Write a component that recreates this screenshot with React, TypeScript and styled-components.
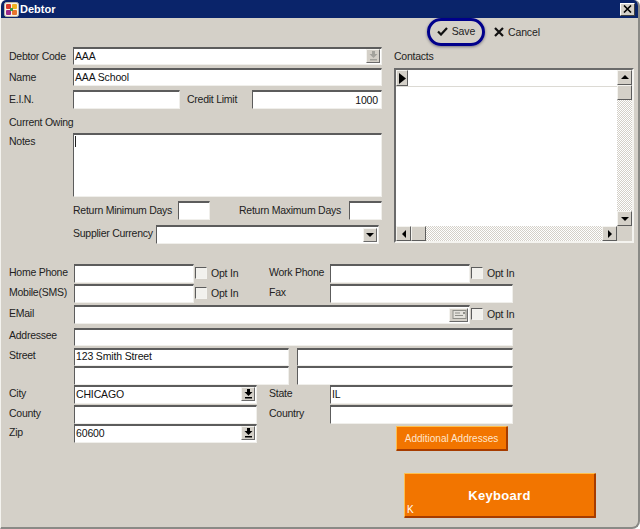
import { createGlobalStyle, styled } from 'styled-components';

const GlobalStyle = createGlobalStyle`
  html, body {
    margin: 0;
    padding: 0;
    background: #fff;
  }
  * {
    box-sizing: border-box;
  }
`;

const Window = styled.div`
  width: 640px;
  height: 529px;
  display: flex;
  flex-direction: column;
  overflow: hidden;
  background: #d4d0c8;
  border-radius: 6px 6px 8px 0;
  border-right: 2px solid #8a8a86;
  border-bottom: 2px solid #8a8a86;
  border-left: 1px solid #f4f3ef;
  font-family: 'Liberation Sans', Arial, sans-serif;
  font-size: 10px;
  color: #222;
`;

const TitleBar = styled.div`
  height: 18px;
  flex: none;
  display: flex;
  align-items: center;
  gap: 1px;
  padding: 0 3px 0 3px;
  background: #0a246a;
  color: #fff;
  font-family: 'Liberation Sans', Arial, sans-serif;
  font-size: 11px;
  font-weight: 700;
`;

const TitleText = styled.span`
  flex: 1;
  padding-bottom: 1px;
`;

const CloseButton = styled.div`
  width: 15px;
  height: 13px;
  display: flex;
  align-items: center;
  justify-content: center;
  background: #d4d0c8;
  border: 1px solid;
  border-color: #fff #404040 #404040 #fff;
`;

const Toolbar = styled.div`
  height: 29px;
  flex: none;
  display: flex;
  align-items: flex-start;
  justify-content: flex-end;
  padding-right: 98px;
`;

const SaveHighlight = styled.div`
  width: 58px;
  height: 28px;
  margin-right: 9px;
  padding-bottom: 2px;
  display: flex;
  align-items: center;
  justify-content: center;
  border: 3px solid #00008b;
  border-radius: 14px;
  box-shadow: 0 1px 3px rgba(0, 0, 40, 0.45);
`;

const ToolButton = styled.div<{ $plain?: boolean }>`
  display: flex;
  align-items: center;
  gap: 4px;
  margin-top: ${({ $plain }) => ($plain ? 8 : 0)}px;
  font-size: 10.5px;
  letter-spacing: -0.1px;
`;

const Content = styled.div`
  flex: 1;
  display: flex;
  flex-direction: column;
  padding-left: 7px;
`;

const TopSection = styled.div`
  display: flex;
  gap: 12px;
`;

const LeftColumn = styled.div`
  width: 374px;
  display: flex;
  flex-direction: column;
`;

const Row = styled.div<{ $top?: number; $indent?: number; $h?: number }>`
  display: flex;
  align-items: center;
  height: ${({ $h }) => ($h ? `${$h}px` : 'auto')};
  margin-top: ${({ $top }) => $top ?? 0}px;
  padding-left: ${({ $indent }) => $indent ?? 0}px;
`;

const Label = styled.span<{ $w?: number; $left?: number; $alignTop?: boolean }>`
  flex: none;
  width: ${({ $w }) => ($w ? `${$w}px` : 'auto')};
  margin-left: ${({ $left }) => $left ?? 0}px;
  white-space: nowrap;
  font-size: 10.5px;
  letter-spacing: -0.25px;
  align-self: ${({ $alignTop }) => ($alignTop ? 'flex-start' : 'center')};
  padding: ${({ $alignTop }) => ($alignTop ? '2px 0 0 1px' : '0 0 1px 1px')};
`;

const IndentLabel = styled(Label)`
  padding-left: 0;
`;

const LowerLabel = styled(Label)<{ $flush?: boolean }>`
  padding-bottom: 4px;
  padding-left: ${({ $flush }) => ($flush ? 0 : 1)}px;
`;

const Field = styled.div<{ $w?: number; $h?: number; $right?: boolean }>`
  width: ${({ $w }) => ($w ? `${$w}px` : '100%')};
  flex: ${({ $w }) => ($w ? 'none' : '1')};
  height: ${({ $h }) => $h ?? 19}px;
  display: flex;
  align-items: center;
  justify-content: ${({ $right }) => ($right ? 'flex-end' : 'space-between')};
  padding: 0 ${({ $right }) => ($right ? '3px' : '1px')} 1px 1px;
  background: #fff;
  border: 2px solid;
  border-color: #5c5c5c #f0efeb #f0efeb #5c5c5c;
  border-width: 2px 1px 1px 1px;
  font-size: 10.5px;
  letter-spacing: -0.15px;
  color: #111;
  white-space: nowrap;
`;

const LowerField = styled(Field)`
  padding-bottom: 3px;
`;

const Caret = styled.span`
  width: 1px;
  height: 11px;
  margin-top: 1px;
  background: #222;
`;

const NotesField = styled(Field)`
  align-items: flex-start;
`;

const ComboButton = styled.div<{ $w?: number }>`
  width: ${({ $w }) => $w ?? 14}px;
  height: 14px;
  flex: none;
  display: flex;
  align-items: center;
  justify-content: center;
  background: #d4d0c8;
  border: 1px solid;
  border-color: #f4f3ef #6a6a6a #6a6a6a #f4f3ef;
`;

const RightColumn = styled.div`
  width: 240px;
  display: flex;
  flex-direction: column;
`;

const ContactsLabel = styled.div`
  height: 21px;
  padding-bottom: 3px;
  display: flex;
  align-items: center;
  font-size: 10.5px;
  letter-spacing: -0.25px;
`;

const Grid = styled.div`
  height: 175px;
  display: grid;
  grid-template-columns: 1fr 15px;
  grid-template-rows: 1fr 15px;
  background: #fff;
  border: 2px solid;
  border-color: #6a6a6a #f4f3ef #f4f3ef #6a6a6a;
`;

const GridBody = styled.div`
  background: #fff;
`;

const GridHeader = styled.div`
  height: 17px;
  display: flex;
  border-bottom: 1px solid #dcdad4;
`;

const RowMarker = styled.div`
  width: 12px;
  display: flex;
  align-items: center;
  justify-content: center;
  background: #d4d0c8;
  border: 1px solid;
  border-color: #f4f3ef #5c5c5c #5c5c5c #f4f3ef;
`;

const ScrollBar = styled.div<{ $horizontal?: boolean }>`
  display: flex;
  flex-direction: ${({ $horizontal }) => ($horizontal ? 'row' : 'column')};
  background: repeating-conic-gradient(#fff 0 25%, #d4d0c8 0 50%) 0 0 / 2px 2px;
`;

const ScrollTrack = styled.div`
  flex: 1;
`;

const ScrollButton = styled.div`
  width: 15px;
  height: 15px;
  flex: none;
  display: flex;
  align-items: center;
  justify-content: center;
  background: #d4d0c8;
  border: 1px solid;
  border-color: #f4f3ef #5c5c5c #5c5c5c #f4f3ef;
`;

const ScrollCorner = styled.div`
  background: #d4d0c8;
`;

const LowerGrid = styled.div`
  margin-top: 20px;
  display: grid;
  grid-template-columns: 66px 120px 75px 61px 140px 43px;
  grid-template-rows: 20px 21px 22px 20px 19px 19px 20px 19px auto;
  align-items: start;
`;

const Cell = styled.div<{ $from?: number; $span?: number }>`
  grid-column: ${({ $from, $span }) => `${$from ?? 'auto'} / span ${$span ?? 1}`};
  height: 19px;
  display: flex;
  align-items: center;
  gap: 8px;
`;

const OptIn = styled.div`
  height: 19px;
  display: flex;
  align-items: center;
  gap: 4px;
  padding: 0 0 2px 1px;
  font-size: 10.5px;
  letter-spacing: -0.2px;
  white-space: nowrap;
`;

const CheckBox = styled.span`
  width: 12px;
  height: 12px;
  flex: none;
  background: #f2f1ed;
  border: 1px solid;
  border-color: #5c5c5c #f4f3ef #f4f3ef #5c5c5c;
`;

const OrangeButton = styled.div<{ $large?: boolean }>`
  position: relative;
  display: flex;
  align-items: center;
  justify-content: center;
  width: ${({ $large }) => ($large ? 192 : 112)}px;
  height: ${({ $large }) => ($large ? 45 : 25)}px;
  background: #f27500;
  color: ${({ $large }) => ($large ? '#fff' : '#ffe6cc')};
  border: 1px solid;
  border-color: #ffc04d #a63c00 #a63c00 #ffc04d;
  border-width: 1px 2px 2px 1px;
  border-radius: 1px;
  font-size: ${({ $large }) => ($large ? 13 : 10)}px;
  font-weight: ${({ $large }) => ($large ? 700 : 400)};
  letter-spacing: ${({ $large }) => ($large ? '0.3px' : '0')};
`;

const AddressCell = styled.div`
  grid-column: 4 / span 3;
  margin-top: 2px;
  display: flex;
  justify-content: flex-end;
  padding-right: 5px;
`;

const ShortcutKey = styled.span`
  position: absolute;
  left: 2px;
  bottom: 1px;
  font-size: 10px;
  font-weight: 400;
`;

const KeyboardRow = styled.div`
  margin-top: 22px;
  padding-left: 396px;
`;

const AppIcon = () => (
  <svg width="15" height="15" viewBox="0 0 15 15">
    <rect x="0.5" y="0.5" width="14" height="14" rx="2" fill="#f6f3e8" stroke="#bdb8a8" />
    <rect x="2" y="2" width="5" height="5" rx="1" fill="#d8392b" />
    <rect x="8" y="2" width="5" height="5" rx="1" fill="#f0b020" />
    <rect x="2" y="8" width="5" height="5" rx="1" fill="#9a2a8c" />
    <rect x="8" y="8" width="5" height="5" rx="1" fill="#e8742c" />
    <rect x="6" y="6" width="3" height="3" fill="#3a9a48" />
  </svg>
);

const CloseGlyph = () => (
  <svg width="9" height="8" viewBox="0 0 9 8">
    <path d="M1 0.5 L8 7.5 M8 0.5 L1 7.5" stroke="#000" strokeWidth="1.6" />
  </svg>
);

const CheckIcon = () => (
  <svg width="11" height="9" viewBox="0 0 11 9">
    <path d="M1 4.5 L4 7.5 L10 1" fill="none" stroke="#111" strokeWidth="2.2" />
  </svg>
);

const CrossIcon = () => (
  <svg width="10" height="10" viewBox="0 0 10 10">
    <path d="M1 1 L9 9 M9 1 L1 9" fill="none" stroke="#111" strokeWidth="2.2" />
  </svg>
);

const ArrowBar = ({ color }: { color: string }) => (
  <svg width="9" height="10" viewBox="0 0 9 10">
    <path d="M3 0 H6 V3 H8.5 L4.5 7 L0.5 3 H3 Z" fill={color} />
    <rect x="1" y="8" width="7" height="1.5" fill={color} />
  </svg>
);

const Triangle = ({ dir }: { dir: 'up' | 'down' | 'left' | 'right' }) => {
  const points = {
    up: '0,5 8,5 4,1',
    down: '0,2 8,2 4,6',
    left: '6,0 6,8 2,4',
    right: '2,0 2,8 6,4',
  }[dir];
  return (
    <svg width="8" height="8" viewBox="0 0 8 8">
      <polygon points={points} fill="#000" />
    </svg>
  );
};

const MarkerArrow = () => (
  <svg width="7" height="11" viewBox="0 0 7 11">
    <polygon points="0,0 7,5.5 0,11" fill="#000" />
  </svg>
);

const Envelope = () => (
  <svg width="16" height="11" viewBox="0 0 16 11">
    <rect x="2" y="1.5" width="13" height="8" fill="#e4e2dc" stroke="#8e8e88" />
    <path d="M4 4 H9 M4 6.5 H12" stroke="#8e8e88" />
    <rect x="12" y="3" width="2" height="2" fill="#8e8e88" />
  </svg>
);

const OptInBox = () => (
  <OptIn>
    <CheckBox />
    Opt In
  </OptIn>
);

export default function App() {
  return (
    <Window>
      <GlobalStyle />
      <TitleBar>
        <AppIcon />
        <TitleText>Debtor</TitleText>
        <CloseButton>
          <CloseGlyph />
        </CloseButton>
      </TitleBar>
      <Toolbar>
        <SaveHighlight>
          <ToolButton>
            <CheckIcon />
            Save
          </ToolButton>
        </SaveHighlight>
        <ToolButton $plain>
          <CrossIcon />
          Cancel
        </ToolButton>
      </Toolbar>
      <Content>
        <TopSection>
          <LeftColumn>
            <Row>
              <Label $w={65}>Debtor Code</Label>
              <Field $h={18}>
                AAA
                <ComboButton>
                  <ArrowBar color="#a3a29c" />
                </ComboButton>
              </Field>
            </Row>
            <Row $top={3}>
              <Label $w={65}>Name</Label>
              <Field $h={18}>AAA School</Field>
            </Row>
            <Row $top={4}>
              <Label $w={65}>E.I.N.</Label>
              <Field $w={107} />
              <Label $w={66} $left={6}>
                Credit Limit
              </Label>
              <Field $right>1000</Field>
            </Row>
            <Row $top={4} $h={18}>
              <Label>Current Owing</Label>
            </Row>
            <Row $top={2}>
              <Label $w={65} $alignTop>
                Notes
              </Label>
              <NotesField $h={64}>
                <Caret />
              </NotesField>
            </Row>
            <Row $top={4} $indent={65}>
              <IndentLabel $w={105}>Return Minimum Days</IndentLabel>
              <Field $w={32} />
              <IndentLabel $w={110} $left={29}>
                Return Maximum Days
              </IndentLabel>
              <Field />
            </Row>
            <Row $top={5} $indent={65}>
              <LowerLabel $w={83} $flush>Supplier Currency</LowerLabel>
              <Field $w={223}>
                <span />
                <ComboButton>
                  <Triangle dir="down" />
                </ComboButton>
              </Field>
            </Row>
          </LeftColumn>
          <RightColumn>
            <ContactsLabel>Contacts</ContactsLabel>
            <Grid>
              <GridBody>
                <GridHeader>
                  <RowMarker>
                    <MarkerArrow />
                  </RowMarker>
                </GridHeader>
              </GridBody>
              <ScrollBar>
                <ScrollButton>
                  <Triangle dir="up" />
                </ScrollButton>
                <ScrollButton />
                <ScrollTrack />
                <ScrollButton>
                  <Triangle dir="down" />
                </ScrollButton>
              </ScrollBar>
              <ScrollBar $horizontal>
                <ScrollButton>
                  <Triangle dir="left" />
                </ScrollButton>
                <ScrollButton />
                <ScrollTrack />
                <ScrollButton>
                  <Triangle dir="right" />
                </ScrollButton>
              </ScrollBar>
              <ScrollCorner />
            </Grid>
          </RightColumn>
        </TopSection>

        <LowerGrid>
          <Cell><LowerLabel>Home Phone</LowerLabel></Cell>
          <Field />
          <OptInBox />
          <Cell><LowerLabel $flush>Work Phone</LowerLabel></Cell>
          <Field />
          <OptInBox />

          <Cell><LowerLabel>Mobile(SMS)</LowerLabel></Cell>
          <Field />
          <OptInBox />
          <Cell><LowerLabel $flush>Fax</LowerLabel></Cell>
          <Cell $span={2}><Field /></Cell>

          <Cell><LowerLabel>EMail</LowerLabel></Cell>
          <Cell $span={4}>
            <Field>
              <span />
              <ComboButton $w={19}>
                <Envelope />
              </ComboButton>
            </Field>
          </Cell>
          <OptInBox />

          <Cell><LowerLabel>Addressee</LowerLabel></Cell>
          <Cell $span={5}><Field $h={18} /></Cell>

          <Cell><LowerLabel>Street</LowerLabel></Cell>
          <Cell $span={5}>
            <LowerField $w={215} $h={18}>123 Smith Street</LowerField>
            <Field $h={18} />
          </Cell>

          <Cell $from={2} $span={5}>
            <Field $w={215} />
            <Field />
          </Cell>

          <Cell><LowerLabel>City</LowerLabel></Cell>
          <Cell $span={2}>
            <LowerField $w={183}>
              CHICAGO
              <ComboButton>
                <ArrowBar color="#000" />
              </ComboButton>
            </LowerField>
          </Cell>
          <Cell><LowerLabel $flush>State</LowerLabel></Cell>
          <Cell $span={2}><LowerField>IL</LowerField></Cell>

          <Cell><LowerLabel>County</LowerLabel></Cell>
          <Cell $span={2}><Field $w={183} /></Cell>
          <Cell><LowerLabel $flush>Country</LowerLabel></Cell>
          <Cell $span={2}><Field /></Cell>

          <Cell><LowerLabel>Zip</LowerLabel></Cell>
          <Cell $span={2}>
            <LowerField $w={183}>
              60600
              <ComboButton>
                <ArrowBar color="#000" />
              </ComboButton>
            </LowerField>
          </Cell>
          <AddressCell>
            <OrangeButton>Additional Addresses</OrangeButton>
          </AddressCell>
        </LowerGrid>

        <KeyboardRow>
          <OrangeButton $large>
            Keyboard
            <ShortcutKey>K</ShortcutKey>
          </OrangeButton>
        </KeyboardRow>
      </Content>
    </Window>
  );
}
